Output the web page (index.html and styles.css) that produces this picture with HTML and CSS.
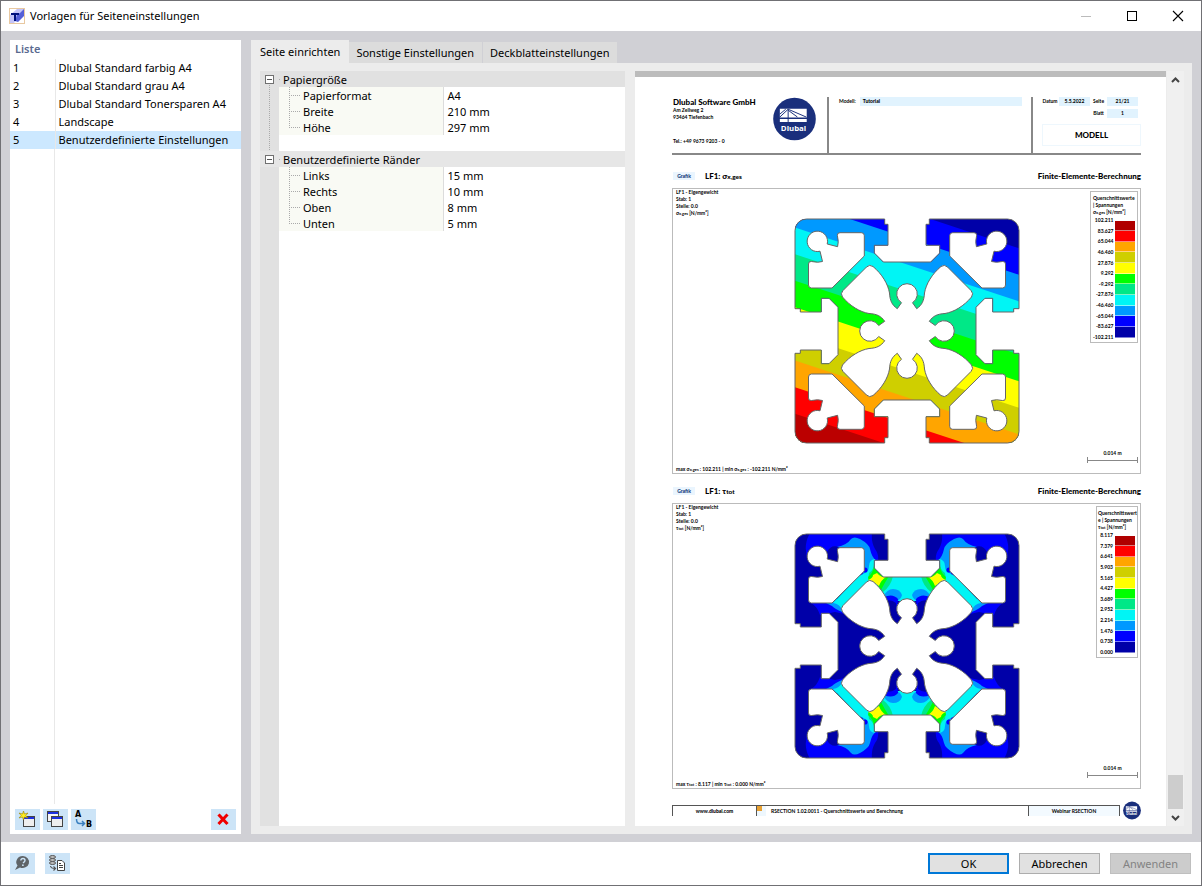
FILE: index.html
```html
<!DOCTYPE html>
<html lang="de">
<head>
<meta charset="utf-8">
<title>Vorlagen für Seiteneinstellungen</title>
<link rel="stylesheet" href="styles.css">
</head>
<body>
<svg class="defs" aria-hidden="true">
  <defs>
    <path id="outline" d="M-22.3-112V-106.7H-19V-85.7H-32.7V-78L-23.7-69H23.7L32.7-78V-85.7H19V-106.7H22.3V-112H100.5A11.5 11.5 0 0 1 112-100.5V-22.3H106.7V-19H85.7V-32.7H78L69-23.7V23.7L78 32.7H85.7V19H106.7V22.3H112V100.5A11.5 11.5 0 0 1 100.5 112H22.3V106.7H19V85.7H32.7V78L23.7 69H-23.7L-32.7 78V85.7H-19V106.7H-22.3V112H-100.5A11.5 11.5 0 0 1-112 100.5V22.3H-106.7V19H-85.7V32.7H-78L-69 23.7V-23.7L-78-32.7H-85.7V-19H-106.7V-22.3H-112V-100.5A11.5 11.5 0 0 1-100.5-112Z"/>
    <clipPath id="profile-clip"><use href="#outline"/></clipPath>
    <path id="chamber" d="M-67-98.3H-45.7Q-42.7-98.3-42.7-95.3V-75L-75-43H-95.5Q-98.5-43-98.5-46V-67Q-98.5-70-95.5-69.5Q-89-68-84.5-69.5L-87-79.8A10.2 10.2 0 1 1-79.8-87L-69.4-84.3Q-68-89-69.6-95.5Q-70-98.3-67-98.3Z"/>
    <path id="star" d="M-5.5-28.3A10.3 10.3 0 1 1 5.5-28.3L9.7-22.3C15-26 17-30 17.5-38C19-47 25-57 34-64.5Q37.5-67 40.5-64L64-40.5Q67-37.5 64.5-34C57-25 47-19 38-17.5C30-17 26-15 22.3-9.7L28.3-5.5A10.3 10.3 0 1 1 28.3 5.5L22.3 9.7C26 15 30 17 38 17.5C47 19 57 25 64.5 34Q67 37.5 64 40.5L40.5 64Q37.5 67 34 64.5C25 57 19 47 17.5 38C17 30 15 26 9.7 22.3L5.5 28.3A10.3 10.3 0 1 1-5.5 28.3L-9.7 22.3C-15 26-17 30-17.5 38C-19 47-25 57-34 64.5Q-37.5 67-40.5 64L-64 40.5Q-67 37.5-64.5 34C-57 25-47 19-38 17.5C-30 17-26 15-22.3 9.7L-28.3 5.5A10.3 10.3 0 1 1-28.3-5.5L-22.3-9.7C-26-15-30-17-38-17.5C-47-19-57-25-64.5-34Q-67-37.5-64-40.5L-40.5-64Q-37.5-67-34-64.5C-25-57-19-47-17.5-38C-17-30-15-26-9.7-22.3Z"/>
    <g id="edges" stroke="#666" stroke-width="1">
      <use href="#outline" fill="none"/>
      <g fill="#fff">
        <use href="#star"/>
        <use href="#chamber"/>
        <use href="#chamber" transform="scale(-1 1)"/>
        <use href="#chamber" transform="scale(1 -1)"/>
        <use href="#chamber" transform="scale(-1 -1)"/>
      </g>
    </g>
    <g id="shear">
      <path fill="#00f" d="M-97-113H-35Q-36-104-32-97Q-28-92-29-85L-43-60L-60-90L-68-99Q-76-102-80-94L-98-84Q-105-99-97-113ZM-96-43L-66-44L-58-31L-72-34L-87-31Q-90-40-96-43Z"/>
      <path fill="#09f" d="M-70-99Q-60-101-56-107Q-53-110-47-107Q-38-102-37-97Q-35-88-31-86L-40-66L-46-76L-44-96ZM-81-43L-70-47L-62-42L-65-34Q-72-37-75-40Z"/>
      <path fill="#00f5f5" d="M-32-87Q-38-86-38-80Q-38-74-44-72L-48-70L-74-43Q-67-42-65-36L-38-64L-24-45H1V-70H-24L-32-78Z"/>
      <circle cx="-42" cy="-76" r="2.6" fill="#00f"/>
      <path fill="#00e887" d="M-33-83Q-33-76-38-73L-39-66L-31-63L-24-54Q-16-60-14-70H-24Z"/>
      <path fill="#0f0" d="M-33-79Q-34-73-39-69L-38-65L-32-64L-26-56Q-23-62-18-70H-24Z"/>
      <path fill="#ff0" d="M-34-71L-30-73Q-26-68-21-69Q-26-66-28-60Q-33-64-39-66Q-34-68-34-71Z"/>
      <path fill="#09f" d="M-24-49Q-20-57-14-57Q-7-57-5-51Q-6-47-10-45L-20-40Z"/>
      <path fill="#00f" d="M-23-49Q-14-53-9-47L-10-36H-20Z"/>
      <path fill="#0000a8" d="M-22-45Q-16-47-11-43L-8-20H-20Z"/>
    </g>
    <symbol id="logo" viewBox="0 0 44 44">
      <circle cx="22" cy="22" r="21.8" fill="#1a2f7c"/>
      <path fill="#fff" d="M7 11.5H34.5V20.5H7ZM7 22H34.5V25H7Z"/>
      <path fill="none" stroke="#1a2f7c" stroke-width="1" d="M7 20L15.5 12L34 20M15.5 12V25M15.5 13L25 20M7 17L13 12"/>
      <text x="21" y="34" text-anchor="middle" class="logo-word">Dlubal</text>
    </symbol>
  </defs>
</svg>

<div class="window">
  <header class="titlebar">
    <svg class="app-icon" viewBox="0 0 16 16"><rect x=".5" y=".5" width="15" height="15" fill="#fff" stroke="#e8c8a0"/><path d="M1 7L8 1H15V3L5 15H1Z" fill="#c4c4f8"/><path d="M15 1V8L9 14L6 13L8 7L11 5Z" fill="#5560d8"/><path d="M2 6H10M6 6V13" stroke="#00107c" stroke-width="2"/></svg>
    <h1>Vorlagen für Seiteneinstellungen</h1>
    <div class="caption-buttons">
      <button type="button" disabled aria-label="Minimieren"><svg viewBox="0 0 12 12"><path d="M1 6.5H11" stroke="#bbb"/></svg></button>
      <button type="button" aria-label="Maximieren"><svg viewBox="0 0 12 12"><rect x="1.5" y="1.5" width="9" height="9" fill="none" stroke="#000"/></svg></button>
      <button type="button" aria-label="Schließen"><svg viewBox="0 0 12 12"><path d="M1 1L11 11M11 1L1 11" stroke="#000" stroke-width="1.1"/></svg></button>
    </div>
  </header>

  <main class="workspace">
    <section class="list-panel">
      <h2>Liste</h2>
      <table class="list">
        <tbody>
          <tr><td>1</td><td>Dlubal Standard farbig A4</td></tr>
          <tr><td>2</td><td>Dlubal Standard grau A4</td></tr>
          <tr><td>3</td><td>Dlubal Standard Tonersparen A4</td></tr>
          <tr><td>4</td><td>Landscape</td></tr>
          <tr class="selected"><td>5</td><td>Benutzerdefinierte Einstellungen</td></tr>
        </tbody>
      </table>
      <div class="list-rest"></div>
      <div class="list-tools">
        <button type="button" class="tool" aria-label="Neu"><svg viewBox="0 0 25 21"><rect x="8.5" y="7.5" width="11" height="10" fill="#eee" stroke="#444"/><path d="M9 8H19V10H9Z" fill="#1c30e0"/><path d="M8.5 2L9.5 5L13 4L10.8 6.5L13 9L9.5 8L8.5 11L7.5 8L4 9L6.2 6.5L4 4L7.5 5Z" fill="#ffee20" stroke="#997f00" stroke-width=".6"/></svg></button>
        <button type="button" class="tool" aria-label="Kopieren"><svg viewBox="0 0 25 21"><rect x="4.5" y="2.5" width="11" height="10" fill="#f4f4f4" stroke="#444"/><path d="M5 3H15V5H5Z" fill="#1c30e0"/><rect x="8.5" y="7.5" width="11" height="10" fill="#eee" stroke="#444"/><path d="M9 8H19V10H9Z" fill="#1c30e0"/></svg></button>
        <button type="button" class="tool" aria-label="Umbenennen"><svg viewBox="0 0 25 21"><text x="4" y="8" class="tool-letter">A</text><text x="15" y="18" class="tool-letter">B</text><path d="M5.5 10Q5.5 14.5 8.5 14.5H13M11 12L13.5 14.5L11 17" fill="none" stroke="#3a80c0" stroke-width="1.5"/></svg></button>
        <button type="button" class="tool last" aria-label="Löschen"><svg viewBox="0 0 25 21"><path d="M8.5 6.5L15.5 14M15.5 6.5L8.5 14" stroke="#f00000" stroke-width="3" stroke-linecap="square"/></svg></button>
      </div>
    </section>

    <section class="editor">
      <nav class="tabs" role="tablist">
        <button type="button" role="tab" aria-selected="true" class="tab active">Seite einrichten</button>
        <button type="button" role="tab" class="tab">Sonstige Einstellungen</button>
        <button type="button" role="tab" class="tab">Deckblatteinstellungen</button>
      </nav>
      <div class="tab-body">
        <div class="properties">
          <table>
            <colgroup><col class="gutter-col"><col class="name-col"><col></colgroup>
            <tbody>
              <tr class="group"><td class="gutter first"><button type="button" class="toggle" aria-label="Zuklappen"></button></td><th colspan="2">Papiergröße</th></tr>
              <tr><td class="gutter line"></td><td class="name">Papierformat</td><td class="value">A4</td></tr>
              <tr><td class="gutter line"></td><td class="name">Breite</td><td class="value">210 mm</td></tr>
              <tr><td class="gutter line"></td><td class="name end">Höhe</td><td class="value">297 mm</td></tr>
              <tr><td class="gutter line"></td><td colspan="2"></td></tr>
              <tr class="group light"><td class="gutter"><button type="button" class="toggle" aria-label="Zuklappen"></button></td><th colspan="2">Benutzerdefinierte Ränder</th></tr>
              <tr><td class="gutter"></td><td class="name">Links</td><td class="value">15 mm</td></tr>
              <tr><td class="gutter"></td><td class="name">Rechts</td><td class="value">10 mm</td></tr>
              <tr><td class="gutter"></td><td class="name">Oben</td><td class="value">8 mm</td></tr>
              <tr><td class="gutter"></td><td class="name end">Unten</td><td class="value">5 mm</td></tr>
            </tbody>
          </table>
        </div>

        <div class="preview">
          <article class="sheet">
            <header class="sheet-head">
              <div class="company">
                <address><strong>Dlubal Software GmbH</strong>Am Zellweg 2<br>93464 Tiefenbach<span class="tel">Tel.: +49 9673 9203 - 0</span></address>
                <svg class="logo"><use href="#logo"/></svg>
              </div>
              <div class="model"><span>Modell:</span><b class="field">Tutorial</b></div>
              <div class="meta">
                <div class="meta-grid">
                  <span>Datum</span><span class="field">5.5.2022</span><span>Seite</span><span class="field">21/21</span>
                  <span></span><span></span><span>Blatt</span><span class="field">1</span>
                </div>
                <strong class="kind">MODELL</strong>
              </div>
            </header>

            <section class="result">
              <div class="result-title"><span class="tag">Grafik</span><h3>LF1: σ<sub>x,ges</sub></h3><h3 class="right">Finite-Elemente-Berechnung</h3></div>
              <div class="figure">
                <p class="info">LF1 - Eigengewicht<br>Stab: 1<br>Stelle: 0.0<br><i>σ<sub>x,ges</sub></i> [N/mm²]</p>
                <svg class="profile" viewBox="-113 -113 226 226">
                  <g clip-path="url(#profile-clip)">
                    <g transform="skewY(18.26)">
                      <rect x="-120" y="-200" width="240" height="400" fill="#0000a8"/>
                      <rect x="-120" y="-119.7" width="240" height="300" fill="#00f"/>
                      <rect x="-120" y="-93.1" width="240" height="300" fill="#09f"/>
                      <rect x="-120" y="-66.5" width="240" height="300" fill="#00f5f5"/>
                      <rect x="-120" y="-39.9" width="240" height="300" fill="#00e887"/>
                      <rect x="-120" y="-13.3" width="240" height="300" fill="#0f0"/>
                      <rect x="-120" y="13.3" width="240" height="300" fill="#ff0"/>
                      <rect x="-120" y="39.9" width="240" height="300" fill="#cfcf00"/>
                      <rect x="-120" y="66.5" width="240" height="300" fill="#ffa500"/>
                      <rect x="-120" y="93.1" width="240" height="300" fill="#f00"/>
                      <rect x="-120" y="119.7" width="240" height="300" fill="#b00"/>
                    </g>
                  </g>
                  <use href="#edges"/>
                </svg>
                <div class="legend">
                  <p>Querschnittswerte<br>| Spannungen<br><i>σ<sub>x,ges</sub></i> [N/mm²]</p>
                  <div class="scale">
                    <ol class="ticks"><li>102.211</li><li>83.627</li><li>65.044</li><li>46.460</li><li>27.876</li><li>9.292</li><li>-9.292</li><li>-27.876</li><li>-46.460</li><li>-65.044</li><li>-83.627</li><li>-102.211</li></ol>
                    <div class="swatches"><i class="c1"></i><i class="c2"></i><i class="c3"></i><i class="c4"></i><i class="c5"></i><i class="c6"></i><i class="c7"></i><i class="c8"></i><i class="c9"></i><i class="c10"></i><i class="c11"></i></div>
                  </div>
                </div>
                <p class="extremes">max <i>σ<sub>x,ges</sub></i> : 102.211 | min <i>σ<sub>x,ges</sub></i> : -102.211 N/mm²</p>
                <p class="ruler">0.014 m<span></span></p>
              </div>
            </section>

            <section class="result">
              <div class="result-title"><span class="tag">Grafik</span><h3>LF1: τ<sub>tot</sub></h3><h3 class="right">Finite-Elemente-Berechnung</h3></div>
              <div class="figure">
                <p class="info">LF1 - Eigengewicht<br>Stab: 1<br>Stelle: 0.0<br><i>τ<sub>tot</sub></i> [N/mm²]</p>
                <svg class="profile" viewBox="-113 -113 226 226">
                  <g clip-path="url(#profile-clip)">
                    <rect x="-113" y="-113" width="226" height="226" fill="#0000a8"/>
                    <use href="#shear"/>
                    <use href="#shear" transform="scale(-1 1)"/>
                    <use href="#shear" transform="scale(1 -1)"/>
                    <use href="#shear" transform="scale(-1 -1)"/>
                  </g>
                  <use href="#edges"/>
                </svg>
                <div class="legend narrow">
                  <p>Querschnittswert<br>e | Spannungen<br><i>τ<sub>tot</sub></i> [N/mm²]</p>
                  <div class="scale">
                    <ol class="ticks"><li>8.117</li><li>7.379</li><li>6.641</li><li>5.903</li><li>5.165</li><li>4.427</li><li>3.689</li><li>2.952</li><li>2.214</li><li>1.476</li><li>0.738</li><li>0.000</li></ol>
                    <div class="swatches"><i class="c1"></i><i class="c2"></i><i class="c3"></i><i class="c4"></i><i class="c5"></i><i class="c6"></i><i class="c7"></i><i class="c8"></i><i class="c9"></i><i class="c10"></i><i class="c11"></i></div>
                  </div>
                </div>
                <p class="extremes">max <i>τ<sub>tot</sub></i> : 8.117 | min <i>τ<sub>tot</sub></i> : 0.000 N/mm²</p>
                <p class="ruler">0.014 m<span></span></p>
              </div>
            </section>

            <footer class="sheet-foot">
              <div class="foot-cells">
                <b class="site">www.dlubal.com</b>
                <span class="program"><i class="mark"></i>RSECTION 1.02.0011 - Querschnittswerte und Berechnung</span>
                <span class="event">Webinar RSECTION</span>
              </div>
              <svg class="small-logo"><use href="#logo"/></svg>
            </footer>
          </article>
          <div class="scrollbar">
            <button type="button" aria-label="Nach oben"><svg viewBox="0 0 9 6"><path d="M1 5L4.5 1.5L8 5" fill="none" stroke="#444" stroke-width="2"/></svg></button>
            <span class="track"><span class="thumb"></span></span>
            <button type="button" aria-label="Nach unten"><svg viewBox="0 0 9 6"><path d="M1 1L4.5 4.5L8 1" fill="none" stroke="#444" stroke-width="2"/></svg></button>
          </div>
        </div>
      </div>
    </section>
  </main>

  <footer class="actions">
    <button type="button" class="tool" aria-label="Hilfe"><svg viewBox="0 0 25 21"><path d="M13 3A6.5 6 0 1 1 10 14.5L5 17L7.5 12.5A6.5 6 0 0 1 13 3Z" fill="#5f6468"/><path d="M10.8 7.5Q11 5.5 13 5.5T15 7.5Q15 8.5 13 10" fill="none" stroke="#cce4f7" stroke-width="1.4"/><circle cx="12.9" cy="12.2" r=".9" fill="#cce4f7"/></svg></button>
    <button type="button" class="tool" aria-label="Standardwerte"><svg viewBox="0 0 25 21"><g fill="#bbb" stroke="#555"><ellipse cx="7.5" cy="10" rx="3" ry="1.5"/><ellipse cx="7.5" cy="7" rx="3" ry="1.5"/><ellipse cx="7.5" cy="4" rx="3" ry="1.5"/></g><path d="M5.500 13Q6 15.5 10 15.5M8.5 13.5L10.5 15.5L8.5 17.5" fill="none" stroke="#555" stroke-width="1.2"/><path d="M12.5 7.5H17L19.5 10V17.5H12.5Z" fill="#fff" stroke="#444"/><path d="M14 10.5H16M14 12.5H18M14 14.5H18" stroke="#444"/></svg></button>
    <button type="button" class="push default">OK</button>
    <button type="button" class="push">Abbrechen</button>
    <button type="button" class="push" disabled>Anwenden</button>
  </footer>
</div>
</body>
</html>
```
FILE: styles.css
```css
* { box-sizing: border-box; }
html, body { height: 100%; }
body {
  margin: 0;
  font: 11px/16px "Noto Sans", "Open Sans", sans-serif;
  color: #000;
}
h1, h2, h3, p, ol { margin: 0; padding: 0; font-size: inherit; }
h1, h2 { font-weight: normal; }
button { margin: 0; padding: 0; border: 0; background: none; font: inherit; color: inherit; }
svg { display: block; }
table { border-collapse: collapse; border-spacing: 0; width: 100%; }
td, th { padding: 0; text-align: left; font-weight: normal; }
.defs { position: absolute; width: 0; height: 0; }

.window {
  min-height: 100%;
  display: flex;
  flex-direction: column;
  border: 1px solid #707074;
  background: #fff;
}

/* Title bar */
.titlebar { display: flex; align-items: center; height: 30px; padding-left: 8px; }
.app-icon { width: 16px; height: 16px; }
.titlebar h1 { margin-left: 5px; font-size: 11px; }
.caption-buttons { display: flex; margin-left: auto; }
.caption-buttons button { width: 46px; height: 30px; display: grid; place-items: center; }
.caption-buttons svg { width: 12px; height: 12px; }

/* Workspace */
.workspace {
  flex: 1;
  display: flex;
  gap: 10px;
  padding: 9px 9px 8px;
  background: #d0d0d5;
}
.list-panel { width: 231px; display: flex; flex-direction: column; background: #fff; }
.list-panel h2 { height: 19px; padding-left: 5px; line-height: 18px; color: #5a6a90; font-weight: 600; }
.list td { height: 18px; padding-left: 3px; }
.list td:first-child { width: 45px; border-right: 1px solid #e8e8e8; }
.list .selected { background: #cce8ff; }
.list-rest { flex: 1; width: 45px; border-right: 1px solid #e8e8e8; }
.list-tools { display: flex; gap: 3px; padding: 5px 5px 4px; }
.tool { width: 25px; height: 21px; background: #cce4f7; }
.tool svg { width: 25px; height: 21px; }
.tool.last { margin-left: auto; }
.tool-letter { font: bold 8px "DejaVu Sans", sans-serif; }

.editor { flex: 1; display: flex; flex-direction: column; min-width: 0; }
.tabs { display: flex; align-items: flex-end; height: 23px; }
.tab { height: 21px; padding: 0 8px 0 7px; background: #dcdcdc; border-right: 1px solid #d0d0d5; }
.tab.active { height: 23px; background: #ececec; border: 0; padding: 0 9px; }
.tab-body { flex: 1; display: flex; gap: 10px; padding: 8px 8px 8px 9px; background: #ececec; }

/* Property grid */
.properties {
  flex: 0 0 365px;
  background: linear-gradient(90deg, #e1e1e1 19px, #fff 19px);
}
.properties table { table-layout: fixed; }
.gutter-col { width: 19px; }
.name-col { width: 164px; }
.properties td, .properties th { height: 16px; line-height: 14px; }
.group { background: #e1e1e1; }
.group.light { background: #e6e6e6; }
.properties th {
  padding: 2px 0 0 4px;
  background: repeating-linear-gradient(90deg, #aaa 0 1px, transparent 1px 2px) 0 8px / 2px 1px no-repeat;
}
.gutter.line, .gutter.first { background: repeating-linear-gradient(#aaa 0 1px, transparent 1px 2px) 9px 0 / 1px 100% no-repeat; }
.gutter.first { background-size: 1px 4px; background-position: 9px 12px; }
.group .gutter { vertical-align: top; }
.toggle {
  display: block;
  width: 9px;
  height: 9px;
  margin: 4px 0 0 5px;
  border: 1px solid #707070;
  background: linear-gradient(#555, #555) center / 5px 1px no-repeat #fff;
}
.properties .name {
  padding: 2px 0 0 24px;
  border-right: 1px solid #dcdcdc;
  background:
    repeating-linear-gradient(#aaa 0 1px, transparent 1px 2px) 10px 0 / 1px 100% no-repeat,
    repeating-linear-gradient(90deg, #aaa 0 1px, transparent 1px 2px) 10px 8px / 12px 1px no-repeat,
    #f9faf4;
}
.properties .name.end { background-size: 1px 9px, 12px 1px, auto; }
.properties .value { padding: 2px 0 0 4px; }

/* Preview */
.preview { flex: 1; display: flex; gap: 1px; min-width: 0; }
.sheet {
  flex: 1;
  min-width: 0;
  padding: 20px 25px 4px 37px;
  border-top: 6px solid #bcbcbc;
  background: #fff;
  font: 700 5px/7px Lato, "Open Sans", sans-serif;
}
.sheet sub, .sheet i { font-style: normal; }
.sheet sub { vertical-align: baseline; font-size: 80%; }
.field { background: #e1f3fe; }

.sheet-head { display: flex; height: 58px; border-bottom: 2px solid #888; }
.company { display: flex; justify-content: space-between; width: 157px; padding-right: 11px; border-right: 2px solid #888; }
.company address { font-style: normal; padding-left: 1px; white-space: nowrap; }
.company strong { display: block; font-size: 8px; line-height: 10px; }
.tel { display: block; margin-top: 17px; }
.logo { width: 43px; height: 44px; }
.logo-word { font: bold 8px "Open Sans", sans-serif; fill: #fff; }
.model { flex: 1; display: flex; align-items: flex-start; gap: 4px; padding: 0 9px 0 10px; line-height: 9px; }
.model .field { flex: 1; padding-left: 3px; }
.meta { width: 110px; padding-left: 9px; border-left: 2px solid #888; }
.meta-grid { display: grid; grid-template-columns: 16px 31px 15px 31px; gap: 3px 1px; line-height: 9px; text-align: center; }
.kind { display: block; height: 22px; margin-top: 6px; border: 1px solid #eef7fd; font-size: 8px; line-height: 20px; text-align: center; }

.result { margin-top: 11px; }
.sheet-head + .result { margin-top: 15px; }
.result-title { display: flex; align-items: center; height: 12px; margin-bottom: 6px; font-weight: 900; }
.result-title h3 { font-size: 8px; font-weight: 900; line-height: 12px; }
.result-title .right { margin-left: auto; }
.tag { width: 22px; margin: 0 10px 0 1px; line-height: 8px; text-align: center; color: #123a78; background: #eaf5fe; }
.figure {
  display: grid;
  min-height: 286px;
  border: 1px solid #bbb;
  padding: 0 2px 0 3px;
}
.figure > * { grid-area: 1 / 1; }
.info { justify-self: start; }
.profile { width: 226px; height: 226px; place-self: center; }
.extremes { place-self: end start; }
.ruler { place-self: end; width: 51px; padding-bottom: 10px; text-align: center; }
.ruler span { display: block; height: 6px; border: solid #888; border-width: 0 1px; background: linear-gradient(#888, #888) center / 100% 1px no-repeat; }
.legend { place-self: start end; width: 48px; margin-top: 2px; padding: 3px 2px 1px; border: 1px solid #bbb; white-space: nowrap; }
.legend p { margin-bottom: 1px; }
.legend.narrow { width: 42px; padding-left: 1px; }
.scale { display: flex; justify-content: flex-end; align-items: center; gap: 2px; }
.ticks { display: flex; flex-direction: column; justify-content: space-between; height: 124px; list-style: none; text-align: right; }
.swatches { display: flex; flex-direction: column; width: 20px; height: 117px; }
.swatches i { flex: 1; border-bottom: 1px solid #ffffff80; }
.c1 { background: #b00000; }
.c2 { background: #f00; }
.c3 { background: #ffa500; }
.c4 { background: #cfcf00; }
.c5 { background: #ff0; }
.c6 { background: #0f0; }
.c7 { background: #00e887; }
.c8 { background: #00f5f5; }
.c9 { background: #09f; }
.c10 { background: #00f; }
.c11 { background: #0000a8; }

.sheet-foot { display: flex; gap: 3px; margin-top: 12px; }
.foot-cells { flex: 1; display: flex; margin-top: 4px; height: 11px; border: solid #555; border-width: 1px 1px 0; line-height: 11px; }
.site { width: 84px; text-align: center; border-right: 1px solid #555; }
.program { flex: 1; display: flex; gap: 5px; }
.mark { width: 9px; background: linear-gradient(#e8a030, #e8a030) 0 0 / 5px 5px no-repeat #eef7fd; }
.event { width: 91px; border-left: 1px solid #555; background: #f3faff; text-align: center; }
.small-logo { width: 18px; height: 19px; }

.scrollbar { width: 17px; display: flex; flex-direction: column; align-items: center; background: #f0f0f0; }
.scrollbar button { width: 17px; height: 17px; display: grid; place-items: center; }
.scrollbar svg { width: 9px; height: 6px; }
.track { flex: 1; display: flex; flex-direction: column; justify-content: flex-end; }
.thumb { width: 15px; height: 34px; background: #cdcdcd; }

/* Dialog buttons */
.actions { display: flex; gap: 10px; height: 43px; padding: 11px 10px 0 9px; }
.push { width: 81px; height: 21px; border: 1px solid #adadad; background: #e1e1e1; font-size: 11px; }
.tool + .push { margin-left: auto; }
.push.default { border: 2px solid #0078d7; }
.push:disabled { color: #838383; background: #ccc; border-color: #bfbfbf; }
```
